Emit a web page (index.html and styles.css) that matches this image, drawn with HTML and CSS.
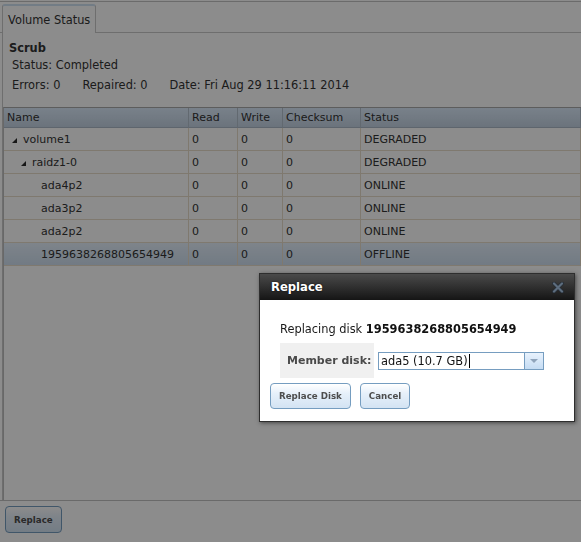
FILE: index.html
```html
<!DOCTYPE html>
<html>
<head>
<meta charset="utf-8">
<title>Volume Status</title>
<link rel="stylesheet" href="styles.css">
</head>
<body>
<div class="page">
  <div class="tabbar">
    <div class="tab">Volume Status</div>
  </div>
  <div class="panel">
    <div class="scrub">
      <div class="scrub-title">Scrub</div>
      <div class="scrub-line">Status: Completed</div>
      <div class="scrub-line stats"><span>Errors: 0</span><span>Repaired: 0</span><span>Date: Fri Aug 29 11:16:11 2014</span></div>
    </div>
    <div class="grid">
      <table class="gtable">
        <thead>
          <tr>
            <th class="c-name">Name</th>
            <th class="c-read">Read</th>
            <th class="c-write">Write</th>
            <th class="c-check">Checksum</th>
            <th class="c-status">Status</th>
          </tr>
        </thead>
        <tbody>
          <tr>
            <td><span class="tree"><span class="expando"><svg width="5" height="5" viewBox="0 0 5 5"><polygon points="5,0 5,5 0,5" fill="#2b2b2b"/></svg></span>volume1</span></td>
            <td>0</td><td>0</td><td>0</td><td>DEGRADED</td>
          </tr>
          <tr>
            <td><span class="tree lvl1"><span class="expando"><svg width="5" height="5" viewBox="0 0 5 5"><polygon points="5,0 5,5 0,5" fill="#2b2b2b"/></svg></span>raidz1-0</span></td>
            <td>0</td><td>0</td><td>0</td><td>DEGRADED</td>
          </tr>
          <tr>
            <td><span class="tree lvl2"><span class="expando"></span>ada4p2</span></td>
            <td>0</td><td>0</td><td>0</td><td>ONLINE</td>
          </tr>
          <tr>
            <td><span class="tree lvl2"><span class="expando"></span>ada3p2</span></td>
            <td>0</td><td>0</td><td>0</td><td>ONLINE</td>
          </tr>
          <tr>
            <td><span class="tree lvl2"><span class="expando"></span>ada2p2</span></td>
            <td>0</td><td>0</td><td>0</td><td>ONLINE</td>
          </tr>
          <tr class="selected">
            <td><span class="tree lvl2"><span class="expando"></span>1959638268805654949</span></td>
            <td>0</td><td>0</td><td>0</td><td>OFFLINE</td>
          </tr>
        </tbody>
      </table>
    </div>
  </div>
  <div class="toolbar">
    <button class="btn">Replace</button>
  </div>
</div>

<div class="underlay"></div>

<div class="dialog">
  <div class="dialog-title">
    <span>Replace</span>
    <svg class="close" width="12" height="11" viewBox="0 0 12 11">
      <path d="M2 1.5 L10 9.5 M10 1.5 L2 9.5" stroke="#262e37" stroke-width="3.8" stroke-linecap="round"/>
      <path d="M2 1.5 L10 9.5 M10 1.5 L2 9.5" stroke="#5d6d7e" stroke-width="2.2" stroke-linecap="round"/>
    </svg>
  </div>
  <div class="dialog-body">
    <div class="replacing">Replacing disk <b>1959638268805654949</b></div>
    <table class="form">
      <tr>
        <th>Member disk:</th>
        <td>
          <div class="select">
            <span class="select-text">ada5 (10.7 GB)<span class="caret"></span></span>
            <span class="select-arrow"><svg width="8" height="4" viewBox="0 0 8 4"><polygon points="0,0 8,0 4,4" fill="#8fa4bb"/></svg></span>
          </div>
        </td>
      </tr>
    </table>
    <div class="actions">
      <button class="btn">Replace Disk</button>
      <button class="btn">Cancel</button>
    </div>
  </div>
</div>
</body>
</html>
```

FILE: styles.css
```css
* { box-sizing: border-box; }

html, body {
  margin: 0;
  background: #fff;
}

body {
  padding-top: 1px;
  width: 581px;
  height: 542px;
  overflow: hidden;
  font-family: "DejaVu Sans", Verdana, sans-serif;
  font-size: 11.4px;
  color: #333;
}

.page {
  height: 541px;
  border-top: 1px solid #c4c4c4;
  display: flex;
  flex-direction: column;
}

/* tabs */
.tabbar {
  flex: none;
  height: 31px;
  display: flex;
  align-items: flex-end;
  padding-left: 2px;
  border-bottom: 1px solid #c8c8c8;
}

.tab {
  height: 29px;
  margin-bottom: -1px;
  padding: 7px 5px 0;
  line-height: 14px;
  background: #fff;
  border: 1px solid #c8c8c8;
  border-top: 2px solid #cfe2f3;
  border-bottom: none;
  border-radius: 3px 3px 0 0;
}

/* panel */
.panel {
  flex: 1;
  margin-left: 2px;
  border-left: 1px solid #c8c8c8;
  display: flex;
  flex-direction: column;
  min-height: 0;
}

.scrub {
  padding: 8px 0 0 6px;
}

.scrub-title {
  font-weight: bold;
  line-height: 14px;
}

.scrub-line {
  padding-left: 3px;
  margin-top: 3px;
  line-height: 14px;
}

.stats {
  margin-top: 6px;
  display: flex;
  gap: 22px;
}

/* grid */
.grid {
  flex: 1;
  margin-top: 15px;
  border-top: 1px solid #aaa;
  border-left: 1px solid #bdbdbd;
}

.gtable {
  width: 100%;
  table-layout: fixed;
  border-collapse: separate;
  border-spacing: 0;
  font-size: 11px;
}

.gtable th,
.gtable td {
  padding: 0 3px;
  text-align: left;
  white-space: nowrap;
  overflow: hidden;
}

.gtable th {
  height: 20px;
  font-weight: normal;
  background: linear-gradient(#dcebfb, #c3d2e2);
  border-right: 1px solid #b3c0cd;
  border-bottom: 1px solid #abb9c6;
}

.gtable td {
  height: 23px;
  border-right: 1px solid #e8dcca;
  border-bottom: 1px solid #e8dcca;
}

.c-name { width: 185px; }
.c-read { width: 49px; }
.c-write { width: 45px; }
.c-check { width: 78px; }

.selected td {
  background: linear-gradient(#e6f1fc, #cfdff0);
}

.tree {
  display: flex;
  align-items: center;
}

.tree.lvl1 { padding-left: 9px; }
.tree.lvl2 { padding-left: 18px; }

.expando {
  flex: none;
  width: 16px;
  padding-left: 5px;
  display: flex;
  align-items: center;
  margin-top: 3px;
}

/* toolbar */
.toolbar {
  flex: none;
  height: 42px;
  border-top: 1px solid #c2c2c2;
  padding: 5px 0 0 5px;
}

.btn {
  height: 27px;
  padding: 0 8px;
  font-family: "DejaVu Sans", Verdana, sans-serif;
  font-size: 8.7px;
  font-weight: bold;
  color: #4d4d4d;
  border: 1px solid #759dc0;
  border-radius: 4px;
  background: linear-gradient(#ffffff 0%, #e6f0fa 40%, #d3e3f3 100%);
  box-shadow: inset 0 1px 0 #fff;
}

/* overlay */
.underlay {
  position: fixed;
  inset: 0;
  background: rgba(0, 0, 0, 0.45);
}

/* dialog */
.dialog {
  position: absolute;
  left: 259px;
  top: 273px;
  width: 316px;
  height: 149px;
  background: #fff;
  border: 1px solid #2e2e2e;
  box-shadow: 1px 1px 4px rgba(0, 0, 0, 0.5);
  display: flex;
  flex-direction: column;
}

.dialog-title {
  flex: none;
  height: 26px;
  padding: 0 10px 0 11px;
  display: flex;
  align-items: center;
  justify-content: space-between;
  background: linear-gradient(#4a4a4a, #151515);
  color: #fff;
  font-size: 11.6px;
  font-weight: bold;
  text-shadow: 0 0 2px rgba(0, 0, 0, 0.8);
}

.close {
  display: block;
}

.dialog-body {
  flex: 1;
  padding: 22px 0 0 0;
}

.replacing {
  padding-left: 20px;
  line-height: 14px;
  color: #1a1a1a;
}

.replacing b {
  color: #111;
}

.form {
  margin: 7px 0 0 20px;
  border-collapse: collapse;
}

.form th {
  width: 94px;
  height: 35px;
  padding: 0 0 0 7px;
  background: #f0f0f0;
  text-align: left;
  color: #4a4a4a;
  font-size: 11px;
  white-space: nowrap;
}

.form td {
  padding: 0 0 0 4px;
  vertical-align: middle;
}

.select {
  width: 166px;
  height: 18px;
  border: 1px solid #769dc0;
  display: flex;
  background: #fff;
}

.select-text {
  flex: 1;
  padding-left: 2px;
  line-height: 16px;
  color: #111;
  display: flex;
  align-items: center;
}

.caret {
  display: inline-block;
  width: 1px;
  height: 14px;
  background: #000;
  margin-left: 1px;
}

.select-arrow {
  flex: none;
  width: 19px;
  border-left: 1px solid #769dc0;
  background: linear-gradient(#e8f2fd, #c5dcf3);
  display: flex;
  align-items: center;
  justify-content: center;
}

.actions {
  margin-top: 5px;
  padding-left: 10px;
  display: flex;
  gap: 9px;
}

.actions .btn {
  height: 26px;
}
```
